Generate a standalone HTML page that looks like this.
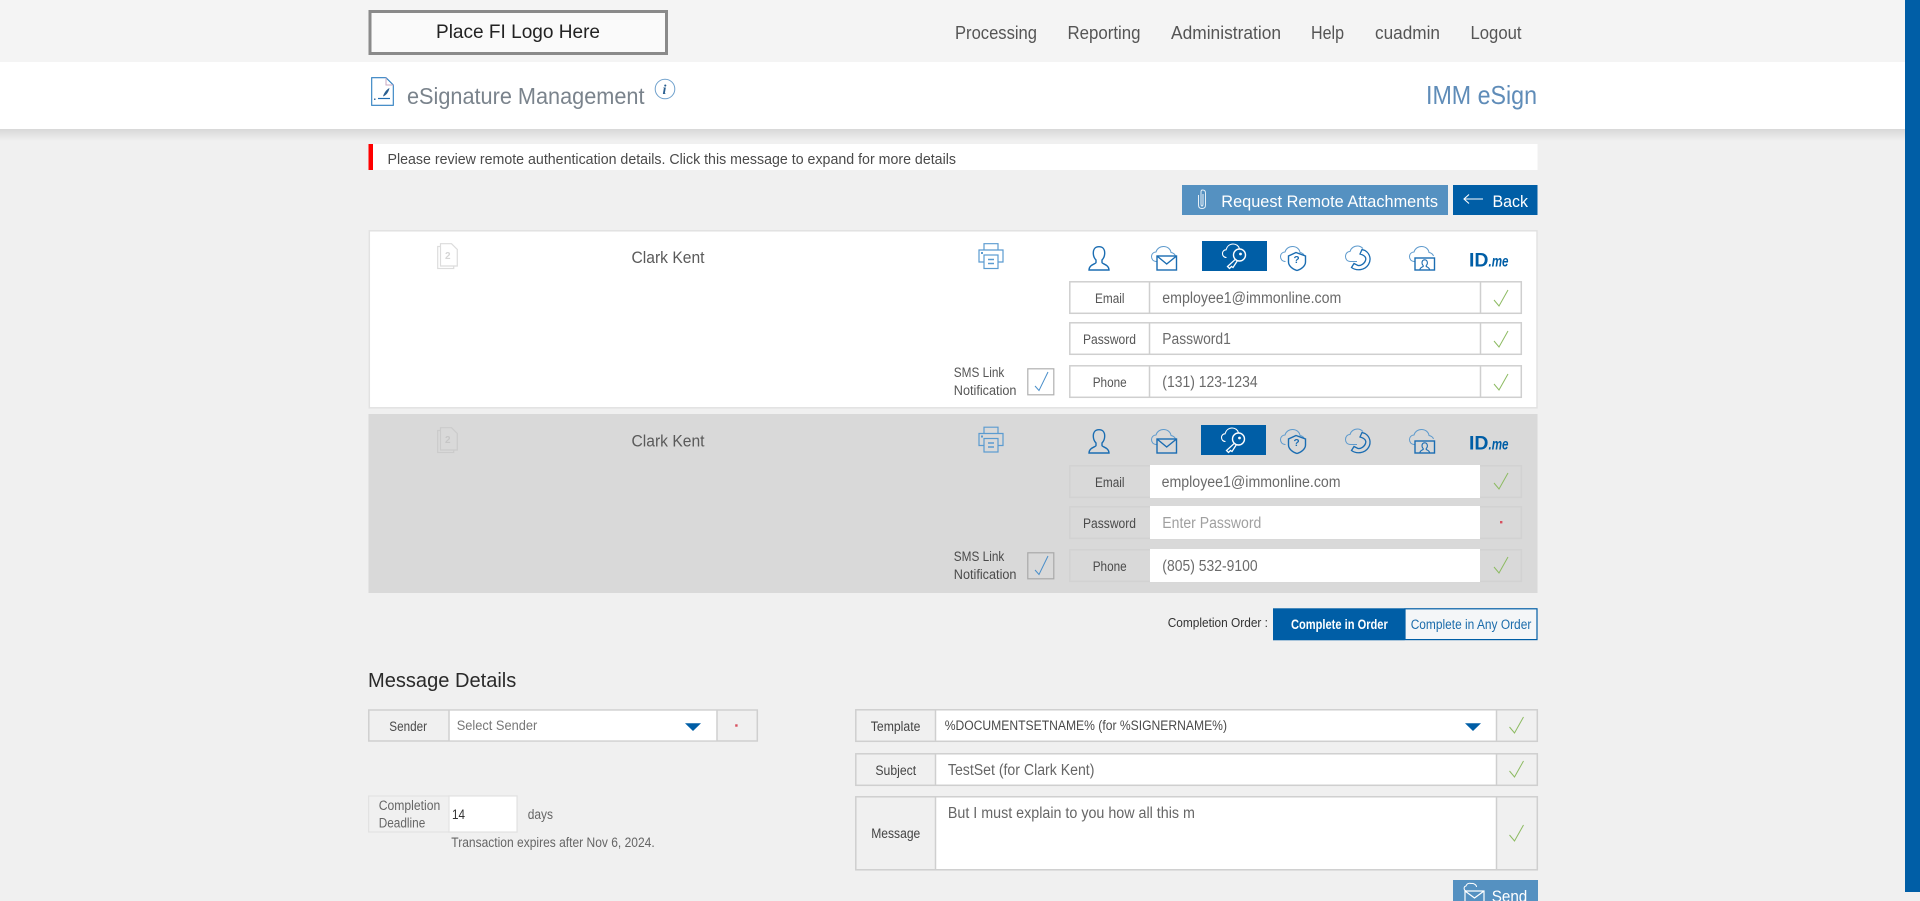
<!DOCTYPE html>
<html lang="en">
<head>
<meta charset="utf-8">
<title>eSignature Management</title>
<style>
html,body{margin:0;padding:0;width:1920px;height:901px;overflow:hidden;background:#f0f0f0}
svg{display:block;position:absolute;left:0;top:0}
text{font-family:"Liberation Sans",sans-serif}
</style>
</head>
<body>
<svg width="1920" height="901" viewBox="0 0 1920 901" xmlns="http://www.w3.org/2000/svg">
<defs>
<linearGradient id="sh" x1="0" y1="0" x2="0" y2="1"><stop offset="0" stop-color="#d8d8d8"/><stop offset="1" stop-color="#f0f0f0"/></linearGradient>
<g id="check"><path d="M0 10 L5 16 L14 0" fill="none" stroke="#8dbb62" stroke-width="1"/></g>
<g id="cloud"><path d="M5.5 15.5C2 15.5 .5 13 .5 10.5C.5 8 2.5 6 5 6C6 2.5 9 .5 12.5 .5C16.5 .5 19.5 3 20 6.5C22.5 7 24 8.5 24.5 10" fill="none" stroke="#5f9bcd" stroke-width="1"/></g>
<g id="person"><path d="M11 .7C7 .7 5.3 3.5 5.3 7C5.3 10 6.5 12.5 8 14V16.5C8 18 1 18.5 1 24H21C21 18.5 14 18 14 16.5V14C15.5 12.5 16.7 10 16.7 7C16.7 3.5 15 .7 11 .7Z" fill="none" stroke="#1b6db2" stroke-width="1.4"/></g>
<g id="mail"><use href="#cloud"/><rect x="6" y="10" width="19.5" height="14" fill="none" stroke="#1b6db2" stroke-width="1.4"/><path d="M6 10L15.7 18L25.5 10" fill="none" stroke="#1b6db2" stroke-width="1.4"/></g>
<g id="shield"><use href="#cloud"/><path d="M16 6.5L25.5 10V16C25.5 20 21 23.5 17 24.5C13 23.5 8.5 20 8.5 16V10Z" fill="none" stroke="#1b6db2" stroke-width="1.4"/></g>
<g id="phone"><path d="M5.5 16C2 16 .5 13.5 .5 11C.5 8 2.5 6 5 6C6 2.5 9 .5 12.5 .5C14.5 .5 16.5 1.5 18 3M5.5 16H12" fill="none" stroke="#5f9bcd" stroke-width="1"/><path d="M17 4L20 5C25 8 26.5 14 23.5 19C20 24.5 12 26 6.5 22L9 18L13 20C16 20.5 19.5 18 20.5 15C21.5 12 20 10 15 8.5Z" fill="none" stroke="#1b6db2" stroke-width="1.3"/></g>
<g id="video"><use href="#cloud"/><rect x="6" y="12" width="19.5" height="12" fill="#fff" fill-opacity="0" stroke="#1b6db2" stroke-width="1.4"/><path d="M15.7 13.8C13.7 13.8 13 15.3 13 17C13 18.2 13.6 19 14.2 19.6V20.4C13.5 21 11 21.3 10.8 24H20.6C20.4 21.3 17.9 21 17.2 20.4V19.6C17.8 19 18.4 18.2 18.4 17C18.4 15.3 17.7 13.8 15.7 13.8Z" fill="none" stroke="#1b6db2" stroke-width="1.1"/></g>
<g id="printer"><g fill="none" stroke="#5b9bd0" stroke-width="1.2"><path d="M6 7V.7H20V7"/><path d="M6 19H1V7H25V19H20"/><rect x="6" y="12" width="14" height="13.5" fill="none"/><path d="M10 16.5H16M10 20.5H16" stroke-width="1.4"/></g><rect x="3" y="9" width="2" height="2" fill="#5b9bd0"/></g>
<g id="keyw"><path d="M4.5 14.5C1.8 14.5 .5 12.5 .5 10.5C.5 8.3 2 6.8 4 6.8C5 3.5 7.5 1 11 1C14.3 1 16.8 3 17.5 5.8" fill="none" stroke="#fff" stroke-width="1.1"/><circle cx="17.5" cy="12" r="6" fill="none" stroke="#fff" stroke-width="1.4"/><circle cx="18.5" cy="11" r="1.4" fill="#fff"/><path d="M13.5 16.2L5.5 23.5L7.5 25.5L9.5 23.5L11 24.5L15.2 18" fill="none" stroke="#fff" stroke-width="1.3"/></g>
</defs>

<!-- top header -->
<rect width="1920" height="62" fill="#f4f4f4"/>
<rect x="370" y="11.5" width="296.5" height="42" fill="#fafafa" stroke="#8a8a8a" stroke-width="3"/>
<text x="436" y="38" font-size="19.5" fill="#222" textLength="164" lengthAdjust="spacingAndGlyphs">Place FI Logo Here</text>
<g font-size="18" fill="#555">
<text x="955" y="39" textLength="82" lengthAdjust="spacingAndGlyphs">Processing</text>
<text x="1067.5" y="39" textLength="73" lengthAdjust="spacingAndGlyphs">Reporting</text>
<text x="1171" y="39" textLength="110" lengthAdjust="spacingAndGlyphs">Administration</text>
<text x="1311" y="39" textLength="33" lengthAdjust="spacingAndGlyphs">Help</text>
<text x="1375" y="39" textLength="65" lengthAdjust="spacingAndGlyphs">cuadmin</text>
<text x="1470.5" y="39" textLength="51" lengthAdjust="spacingAndGlyphs">Logout</text>
</g>

<!-- sub-header -->
<rect y="62" width="1920" height="67" fill="#fff"/>
<rect y="129" width="1920" height="12" fill="url(#sh)"/>
<g transform="translate(371,77)">
<path d="M.7 .7H15L22.3 8V28.3H.7Z" fill="none" stroke="#2e7fc0" stroke-width="1.1"/>
<path d="M15 .7V8H22.3" fill="none" stroke="#c9a7c0" stroke-width="1"/>
<path d="M7 21.5H19" stroke="#1d6bb0" stroke-width="1.2"/>
<path d="M18.5 11C16 12 13 15.5 12 19.5C15 18.5 17.5 15.5 18.5 11Z" fill="#2a5f90"/>
<rect x="3" y="21.5" width="1.5" height="1.5" fill="#3a6fa0"/>
</g>
<text x="407" y="104" font-size="23" fill="#7a838c" textLength="237.5" lengthAdjust="spacingAndGlyphs">eSignature Management</text>
<circle cx="665" cy="89" r="9.8" fill="none" stroke="#6ea0cc" stroke-width="1"/>
<text x="662.5" y="94" font-size="14" font-weight="bold" font-style="italic" fill="#2a5f90" style="font-family:'Liberation Serif',serif">i</text>
<text x="1426" y="104" font-size="26" fill="#5f8cb8" textLength="111" lengthAdjust="spacingAndGlyphs">IMM eSign</text>

<!-- alert -->
<rect x="368.5" y="144" width="1169" height="26" fill="#fff"/>
<rect x="368.5" y="144" width="4.5" height="26" fill="#f00"/>
<text x="387.5" y="164" font-size="14.5" fill="#4a4a4a" textLength="568.5" lengthAdjust="spacingAndGlyphs">Please review remote authentication details. Click this message to expand for more details</text>

<!-- action buttons -->
<rect x="1182" y="185" width="266" height="30" fill="#5591c1"/>
<path d="M1203 194V204Q1203 206 1202 206Q1201 206 1201 204V192Q1201 190 1202.5 190Q1205.5 190 1205.5 193V205Q1205.5 208.5 1202 208.5Q1198.5 208.5 1198.5 205V195" fill="none" stroke="#e6f0f8" stroke-width="1"/>
<text x="1221.3" y="207" font-size="16.5" fill="#fff" textLength="216.7" lengthAdjust="spacingAndGlyphs">Request Remote Attachments</text>
<rect x="1453" y="185" width="84.5" height="30" fill="#005ea6"/>
<path d="M1483 199H1464M1469 194.5L1464 199L1469 203.5" fill="none" stroke="#fff" stroke-width="1.1"/>
<text x="1492.5" y="207" font-size="17" fill="#fff" textLength="35.5" lengthAdjust="spacingAndGlyphs">Back</text>

<!-- card 1 -->
<rect x="369.3" y="230.8" width="1167.7" height="177" fill="#fff" stroke="#e2e2e2" stroke-width="1.5"/>
<g transform="translate(437,243)" fill="#fff" stroke="#dcdcdc" stroke-width="1.2">
<rect x=".7" y="3.5" width="16" height="22" />
<path d="M3.5 .7H14.5L20.3 6.5V23H3.5Z"/>
</g>
<text x="445" y="259" font-size="10" font-weight="bold" fill="#d6d6d6">2</text>
<text x="631.5" y="263" font-size="17" fill="#5a5a5a" textLength="73" lengthAdjust="spacingAndGlyphs">Clark Kent</text>
<use href="#printer" x="978" y="243"/>
<use href="#person" x="1088" y="246"/>
<use href="#mail" x="1151" y="246"/>
<rect x="1202" y="241" width="65" height="30" fill="#005ea6"/>
<use href="#keyw" x="1222" y="243"/>
<use href="#shield" x="1280" y="246"/>
<text x="1293.5" y="263" font-size="10" font-weight="bold" fill="#1b6db2">?</text>
<use href="#phone" x="1345" y="245.5"/>
<use href="#video" x="1409" y="246"/>
<text x="1469" y="266.5" font-size="19" font-weight="bold" fill="#005ea6" textLength="19.5" lengthAdjust="spacingAndGlyphs">ID</text>
<text x="1488.5" y="266.5" font-size="16" font-weight="bold" font-style="italic" fill="#005ea6" textLength="20" lengthAdjust="spacingAndGlyphs">.me</text>

<g fill="#fff" stroke="#cfcfcf" stroke-width="1.5">
<rect x="1069.8" y="281.8" width="451.5" height="31.5"/>
<rect x="1069.8" y="322.8" width="451.5" height="31.5"/>
<rect x="1069.8" y="365.8" width="451.5" height="31.5"/>
</g>
<path d="M1149.5 282V313M1480.5 282V313M1149.5 323V354M1480.5 323V354M1149.5 366V397M1480.5 366V397" stroke="#cfcfcf" stroke-width="1.5"/>
<g font-size="13.5" fill="#555">
<text x="1095" y="303" textLength="29.5" lengthAdjust="spacingAndGlyphs">Email</text>
<text x="1083" y="344" textLength="53" lengthAdjust="spacingAndGlyphs">Password</text>
<text x="1092.7" y="387" textLength="34" lengthAdjust="spacingAndGlyphs">Phone</text>
<text x="953.8" y="377" textLength="50.5" lengthAdjust="spacingAndGlyphs">SMS Link</text>
<text x="953.8" y="395" textLength="62.7" lengthAdjust="spacingAndGlyphs">Notification</text>
</g>
<g font-size="15.5" fill="#6a6a6a">
<text x="1162.3" y="303" textLength="179" lengthAdjust="spacingAndGlyphs">employee1@immonline.com</text>
<text x="1162.3" y="344" textLength="68.5" lengthAdjust="spacingAndGlyphs">Password1</text>
<text x="1162.3" y="387" textLength="95.3" lengthAdjust="spacingAndGlyphs">(131) 123-1234</text>
</g>
<use href="#check" x="1494" y="290"/>
<use href="#check" x="1494" y="331"/>
<use href="#check" x="1494" y="374"/>
<rect x="1027.8" y="368.8" width="26" height="26" fill="#fff" stroke="#b0b0b0" stroke-width="1.2"/>
<path d="M1035 386L1039 390.5L1048 372" fill="none" stroke="#4a8fca" stroke-width="1"/>

<!-- card 2 -->
<rect x="368.5" y="414" width="1169" height="179" fill="#d9d9d9"/>
<g transform="translate(437,427)" fill="#d9d9d9" stroke="#cbcbcb" stroke-width="1.2">
<rect x=".7" y="3.5" width="16" height="22" />
<path d="M3.5 .7H14.5L20.3 6.5V23H3.5Z"/>
</g>
<text x="445" y="443" font-size="10" font-weight="bold" fill="#c6c6c6">2</text>
<text x="631.5" y="446.5" font-size="17" fill="#5a5a5a" textLength="73" lengthAdjust="spacingAndGlyphs">Clark Kent</text>
<use href="#printer" x="978" y="426.5"/>
<use href="#person" x="1088" y="429"/>
<use href="#mail" x="1151" y="429"/>
<rect x="1201" y="425" width="65" height="30" fill="#005ea6"/>
<use href="#keyw" x="1221" y="427"/>
<use href="#shield" x="1280" y="429"/>
<text x="1293.5" y="446" font-size="10" font-weight="bold" fill="#1b6db2">?</text>
<use href="#phone" x="1345" y="428.5"/>
<use href="#video" x="1409" y="429"/>
<text x="1469" y="449.5" font-size="19" font-weight="bold" fill="#005ea6" textLength="19.5" lengthAdjust="spacingAndGlyphs">ID</text>
<text x="1488.5" y="449.5" font-size="16" font-weight="bold" font-style="italic" fill="#005ea6" textLength="20" lengthAdjust="spacingAndGlyphs">.me</text>

<g fill="#d9d9d9" stroke="#d2d2d2" stroke-width="1.5">
<rect x="1069.8" y="465.8" width="451.5" height="31.5"/>
<rect x="1069.8" y="506.8" width="451.5" height="31.5"/>
<rect x="1069.8" y="549.8" width="451.5" height="31.5"/>
</g>
<g fill="#fff">
<rect x="1150" y="465" width="330" height="33"/>
<rect x="1150" y="506" width="330" height="33"/>
<rect x="1150" y="549" width="330" height="33"/>
</g>
<g font-size="13.5" fill="#4a4a4a">
<text x="1095" y="487" textLength="29.5" lengthAdjust="spacingAndGlyphs">Email</text>
<text x="1083" y="528" textLength="53" lengthAdjust="spacingAndGlyphs">Password</text>
<text x="1092.7" y="571" textLength="34" lengthAdjust="spacingAndGlyphs">Phone</text>
<text x="953.8" y="561" textLength="50.5" lengthAdjust="spacingAndGlyphs">SMS Link</text>
<text x="953.8" y="579" textLength="62.7" lengthAdjust="spacingAndGlyphs">Notification</text>
</g>
<g font-size="15.5" fill="#6a6a6a">
<text x="1161.6" y="487" textLength="179" lengthAdjust="spacingAndGlyphs">employee1@immonline.com</text>
<text x="1162.3" y="528" fill="#a0a0a0" textLength="99" lengthAdjust="spacingAndGlyphs">Enter Password</text>
<text x="1162.3" y="571" textLength="95.3" lengthAdjust="spacingAndGlyphs">(805) 532-9100</text>
</g>
<use href="#check" x="1494" y="473"/>
<rect x="1500" y="521" width="2.4" height="2.4" fill="#d8505f"/>
<use href="#check" x="1494" y="557"/>
<rect x="1027.8" y="552.8" width="26" height="26" fill="#d9d9d9" stroke="#a8a8a8" stroke-width="1.2"/>
<path d="M1035 570L1039 574.5L1048 556" fill="none" stroke="#4a8fca" stroke-width="1"/>

<!-- completion order -->
<text x="1167.7" y="627" font-size="13" fill="#333" textLength="100.3" lengthAdjust="spacingAndGlyphs">Completion Order :</text>
<rect x="1405" y="608.8" width="132" height="30.8" fill="#f4f6f8" stroke="#005ea6" stroke-width="1.2"/>
<rect x="1273" y="608.3" width="131.6" height="32" fill="#005ea6"/>
<text x="1291" y="629" font-size="13.5" font-weight="bold" fill="#fff" textLength="96.8" lengthAdjust="spacingAndGlyphs">Complete in Order</text>
<text x="1410.7" y="629" font-size="13.5" fill="#1c6cab" textLength="120.6" lengthAdjust="spacingAndGlyphs">Complete in Any Order</text>

<!-- message details -->
<text x="368" y="687" font-size="20" fill="#2a2a2a" textLength="148.3" lengthAdjust="spacingAndGlyphs">Message Details</text>

<rect x="368.8" y="710" width="388.5" height="31" fill="#f0f0f0" stroke="#cfcfcf" stroke-width="1.5"/>
<rect x="449" y="710.8" width="267.5" height="29.5" fill="#fff"/>
<path d="M449 710V741M717 710V741" stroke="#cfcfcf" stroke-width="1.5"/>
<text x="389.3" y="731" font-size="14" fill="#4a4a4a" textLength="37.7" lengthAdjust="spacingAndGlyphs">Sender</text>
<text x="456.7" y="730" font-size="14" fill="#777" textLength="80.6" lengthAdjust="spacingAndGlyphs">Select Sender</text>
<path d="M685 723.3H701L693 731Z" fill="#005ea6"/>
<rect x="735.2" y="724.3" width="2.4" height="2.4" fill="#d8505f"/>

<rect x="368.6" y="796" width="148.4" height="36" fill="#f0f0f0" stroke="#e2e2e2" stroke-width="1.2"/>
<rect x="449" y="796" width="68" height="36" fill="#fff" stroke="#e2e2e2" stroke-width="1.2"/>
<g font-size="13.5" fill="#666">
<text x="378.7" y="810" textLength="61.6" lengthAdjust="spacingAndGlyphs">Completion</text>
<text x="378.7" y="827.7" textLength="46.6" lengthAdjust="spacingAndGlyphs">Deadline</text>
<text x="527.7" y="819" textLength="25.3" lengthAdjust="spacingAndGlyphs">days</text>
</g>
<text x="452" y="819" font-size="13.5" fill="#333" textLength="13" lengthAdjust="spacingAndGlyphs">14</text>
<text x="451.3" y="847" font-size="13.5" fill="#666" textLength="203.4" lengthAdjust="spacingAndGlyphs">Transaction expires after Nov 6, 2024.</text>

<!-- right column -->
<g fill="#f0f0f0" stroke="#cfcfcf" stroke-width="1.5">
<rect x="855.8" y="709.8" width="681.5" height="31.5"/>
<rect x="855.8" y="753.8" width="681.5" height="31.5"/>
<rect x="855.8" y="796.8" width="681.5" height="73"/>
</g>
<g fill="#fff">
<rect x="936" y="710.6" width="560.5" height="29.9"/>
<rect x="936" y="754.6" width="560.5" height="29.9"/>
<rect x="936" y="797.6" width="560.5" height="71.4"/>
</g>
<path d="M935.5 710V741M1496.5 710V741M935.5 754V785M1496.5 754V785M935.5 797V870M1496.5 797V870" stroke="#cfcfcf" stroke-width="1.5"/>
<g font-size="13.5" fill="#444">
<text x="870.8" y="731" textLength="49.6" lengthAdjust="spacingAndGlyphs">Template</text>
<text x="875.4" y="775" textLength="40.8" lengthAdjust="spacingAndGlyphs">Subject</text>
<text x="871.2" y="838" textLength="49.1" lengthAdjust="spacingAndGlyphs">Message</text>
<text x="944.7" y="730" fill="#4a4a4a" textLength="282.3" lengthAdjust="spacingAndGlyphs">%DOCUMENTSETNAME% (for %SIGNERNAME%)</text>
</g>
<path d="M1465 723.3H1481L1473 731Z" fill="#005ea6"/>
<g font-size="15.5" fill="#666">
<text x="947.9" y="775" textLength="146.5" lengthAdjust="spacingAndGlyphs">TestSet (for Clark Kent)</text>
<text x="947.9" y="818" textLength="247" lengthAdjust="spacingAndGlyphs">But I must explain to you how all this m</text>
</g>
<use href="#check" x="1509.5" y="717"/><use href="#check" x="1509.5" y="761"/><use href="#check" x="1509.5" y="825"/>

<rect x="1453" y="880" width="85" height="21" fill="#5591c1"/>
<path d="M1466 891C1463.5 890 1463.5 886.5 1466 886C1467 883 1470 883 1471 883.5C1474 883 1476.5 885 1476.5 887" fill="none" stroke="#fff" stroke-width="1"/>
<path d="M1465 891H1484V902H1465ZM1465 891L1474.5 898L1484 891" fill="none" stroke="#fff" stroke-width="1.2"/>
<text x="1491.7" y="902" font-size="17" fill="#fff" textLength="35.6" lengthAdjust="spacingAndGlyphs">Send</text>

<!-- scroll thumb -->
<rect x="1905" y="0" width="15" height="892" fill="#005ea6"/>
</svg>
</body>
</html>
